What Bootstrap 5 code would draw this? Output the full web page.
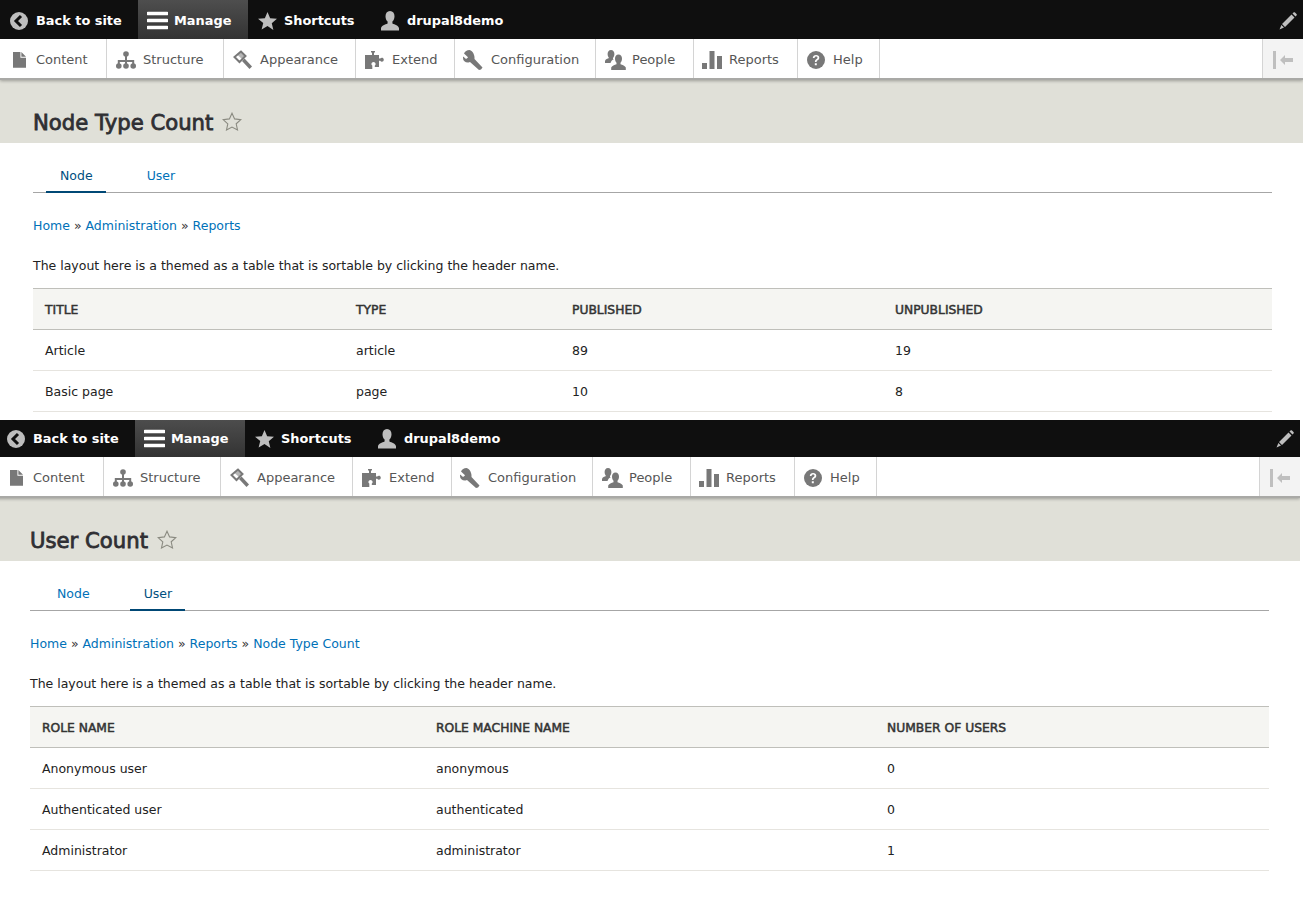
<!DOCTYPE html>
<html lang="en"><head><meta charset="utf-8"><title>Node Type Count</title>
<link rel="stylesheet" href="https://cdn.jsdelivr.net/npm/bootstrap@5.3.0/dist/css/bootstrap.min.css">
<style>
body{font-family:"DejaVu Sans",Verdana,sans-serif;font-size:12.5px;color:#222330;background:#fff;overflow-x:hidden}
.shot{width:1303px;height:420px;overflow:hidden}
.shot-b{margin-left:-3px;height:484px}
.shot-b .barblack{margin-top:-2px}
.barblack{height:39px;background:#0f0f0f;color:#fff;font-weight:700;font-size:12.9px}
.barblack a{color:#fff;text-decoration:none;height:39px;padding-top:2px;display:flex;align-items:center;white-space:nowrap}
.tab-back{padding-left:10px;width:138px}
.tab-back svg{margin-right:8px}
.tab-man{width:110px;background:linear-gradient(#4e4e4e,#333);padding-left:9px}
.tab-man svg{margin-right:6px}
.tab-sho{width:125px;padding-left:10px}
.tab-sho svg{margin-right:7px}
.tab-usr{padding-left:8px}
.tab-usr svg{margin-right:8px}
.pencil{margin-left:auto;margin-right:6px}
.bartray{height:39px;background:#fff;box-shadow:0 2px 0 #a9a9a6,0 3px 3px rgba(0,0,0,.3);position:relative;font-size:13px}
.bartray a{color:#565656;text-decoration:none;height:39px;padding-top:2px;display:flex;align-items:center;border-right:1px solid #d4d4d4;white-space:nowrap}
.bartray svg{margin-right:7px;flex:none}
.tog{margin-left:auto;width:41px;background:#f3f3f3;border-left:1px solid #d4d4d4;height:39px;padding-top:2px;display:flex;align-items:center;justify-content:center}
.bartray .tog svg{margin:0}
.headband{height:65px;background:#e0e0d8;padding:31px 33px 0;display:flex;align-items:flex-start}
.headband h1{font-family:"DejaVu Sans",Verdana,sans-serif;font-size:21.2px;font-weight:400;-webkit-text-stroke:.8px #2f2f33;margin:0;line-height:28px;color:#2f2f33}
.headband svg{margin:3px 0 0 9px}
.bodywrap{padding:0 31px 0 33px}
.tabrow{height:50px;border-bottom:1px solid #a6a6a6;display:flex;padding-left:13px}
.tabrow a{text-decoration:none;color:#0071b8;height:50px;padding:16px 13px 0 14px;display:flex;align-items:center;margin-right:27px}
.tabrow a.on{color:#004f80;border-bottom:2px solid #004875;padding-top:18px}
.crumbs{margin-top:24px;line-height:18px;color:#333}
.crumbs a{color:#0071b8;text-decoration:none}
.intro{margin:22px 0 13px;line-height:18px;color:#222}
.dtab{width:100%;table-layout:fixed;border-collapse:collapse;color:#222}
.dtab th{background:#f5f5f2;border-top:1px solid #bfbfba;border-bottom:1px solid #bfbfba;height:41px;padding:3px 12px 0;font-weight:400;text-transform:uppercase;color:#333;font-size:12.3px;-webkit-text-stroke:.5px #333}
.dtab td{height:41px;padding:3px 12px 0;border-bottom:1px solid #e6e4df}
</style></head><body>
<svg width="0" height="0" class="d-block">
<defs>
<symbol id="i-back" viewBox="0 0 18 18"><circle cx="9" cy="9" r="9" fill="#bebebe"/><path d="M11 4 6 9l5 5" fill="none" stroke="#0f0f0f" stroke-width="3"/></symbol>
<symbol id="i-menu" viewBox="0 0 21 19"><path d="M1 2.500h19M1 9.500h19M1 16.500h19" stroke="#fff" stroke-width="3.400" stroke-linecap="round"/></symbol>
<symbol id="i-star" viewBox="0 0 20 19"><path d="M10 0l2.800 6.600 7.200.6-5.500 4.700 1.700 7.100L10 14.900 3.800 18.600l1.700-7.100L0 7.200l7.200-.6z" fill="#bebebe"/></symbol>
<symbol id="i-user" viewBox="1 0 18 20"><path d="M10 0c3 0 4.500 2.200 4.500 5.300 0 2.400-1 4.300-2.100 5.300v1.900c2.500 1 6.100 2.100 6.600 4.700v2.300H1v-2.300c.5-2.600 4.100-3.700 6.600-4.700v-1.900C6.500 9.600 5.500 7.700 5.500 5.300 5.500 2.200 7 0 10 0z" fill="#bebebe"/></symbol>
<symbol id="i-pen" viewBox="0 0 18 18"><path d="M12.500 2.500l3 3L6 15l-3-3zM13.500 1.500l1-1c.5-.5 1-.5 1.500 0l1.500 1.500c.5.500.500 1 0 1.500l-1 1zM2.400 13l2.600 2.600L.5 17.500z" fill="#bebebe"/></symbol>
<symbol id="i-content" viewBox="0 0 14 18"><path d="M0 1h8v6h6v11H0zM9 1l5 5H9z" fill="#787878"/></symbol>
<symbol id="i-struct" viewBox="0 0 20 18"><circle cx="10" cy="3" r="2.800" fill="#787878"/><circle cx="2.800" cy="15" r="2.800" fill="#787878"/><circle cx="10" cy="15" r="2.800" fill="#787878"/><circle cx="17.200" cy="15" r="2.800" fill="#787878"/><path d="M10 3v12M2.800 15v-5h14.400v5" fill="none" stroke="#787878" stroke-width="2"/></symbol>
<symbol id="i-appear" viewBox="0 0 20 20"><path d="M8 1.500 1.500 7 6.500 12l6-6z" fill="none" stroke="#787878" stroke-width="2"/><path d="M7.500 1 13 6 9.500 9.500 4 4.500z" fill="#787878" opacity=".55"/><path d="M9 11l2.500-2.500 7.500 8L16.500 19z" fill="#787878"/></symbol>
<symbol id="i-ext" viewBox="0 0 20 18"><path d="M6 0h4v1.500H9v2.500h5v3.600h1.200c.8-1 2.100-1.200 3-.4.800.7.800 2.300 0 3-.9.800-2.200.6-3-.4H14v6.200H9.800v-1.500c1-.8 1.100-2 .3-2.800-.8-.8-2.400-.8-3.200 0-.8.800-.6 2 .4 2.800V18H0V4h7V1.500H6z" fill="#787878"/></symbol>
<symbol id="i-conf" viewBox="0 0 20 20"><path d="M6.500 0C3.800 0 2 1.500 1 3.500L5 7.200c-.4.900-1.200 1.500-2.300 1.500L.2 6.500C0 7 0 7.500 0 8c0 3 2.500 4.800 5.500 4.500l1.500-.5 9 8 2-.5 1.500-2-8-8.500c.5-3.500-1.500-8-5-9z" fill="#787878"/></symbol>
<symbol id="i-people" viewBox="0 0 21 20"><path d="M6 0c2.200 0 3.400 1.700 3.400 4 0 1.800-.7 3.100-1.400 3.900v1l.8.400c-1.300.6-2.800 1.800-3.300 3.700H0v-2c.4-1.600 2.700-2.200 4-2.900V7.900C3.300 7.100 2.600 5.800 2.600 4 2.600 1.700 3.800 0 6 0z" fill="#787878"/><path d="M13.500 4.500c2.300 0 3.500 1.700 3.500 4.200 0 1.800-.8 3.300-1.500 4v1.500c1.800.8 4.800 1.500 5.300 3.400V20H6.200v-2.400c.5-1.900 3.500-2.600 5.300-3.400v-1.500c-.7-.7-1.500-2.200-1.500-4 0-2.500 1.200-4.200 3.500-4.200z" fill="#787878"/></symbol>
<symbol id="i-rep" viewBox="0 0 20 18"><path d="M0 12h5v6H0zM7.500 0h5v18h-5zM15 5h5v13h-5z" fill="#787878"/></symbol>
<symbol id="i-help" viewBox="0 0 18 18"><circle cx="9" cy="9" r="9" fill="#787878"/><path d="M5.800 7c0-2 1.500-3 3.300-3s3.200 1 3.200 2.800c0 2.400-2.700 2.300-2.700 4.200H7.900c0-3 2.600-2.800 2.600-4.200 0-.8-.6-1.200-1.400-1.200-.9 0-1.500.6-1.500 1.400zM7.800 12.200h2v2h-2z" fill="#fff"/></symbol>
<symbol id="i-tog" viewBox="0 0 20 18"><path d="M0 0h3v18H0zM7 9l5-5v3h8v4h-8v3z" fill="#bfbfbf"/></symbol>
<symbol id="i-fav" viewBox="0 0 20 19"><path d="M10 1.200l2.600 5.700 6.200.7-4.600 4.200 1.300 6.100L10 15l-5.500 3 1.300-6.100L1.200 7.600l6.200-.7z" fill="none" stroke="#8a8a80" stroke-width="1.100"/></symbol>
</defs></svg>

<section class="shot">
 <div class="barblack d-flex">
  <a class="tab-back" href="#"><svg width="18" height="18"><use href="#i-back"/></svg>Back to site</a>
  <a class="tab-man" href="#"><svg width="21" height="19"><use href="#i-menu"/></svg>Manage</a>
  <a class="tab-sho" href="#"><svg width="19" height="18"><use href="#i-star"/></svg>Shortcuts</a>
  <a class="tab-usr" href="#"><svg width="18" height="20"><use href="#i-user"/></svg>drupal8demo</a>
  <a class="pencil" href="#"><svg width="18" height="18"><use href="#i-pen"/></svg></a>
 </div>
 <div class="bartray d-flex">
  <a style="width:107px;padding-left:13px" href="#"><svg width="13" height="17" style="margin-right:10px"><use href="#i-content"/></svg>Content</a>
  <a style="width:117px;padding-left:9px" href="#"><svg width="20" height="18"><use href="#i-struct"/></svg>Structure</a>
  <a style="width:132px;padding-left:9px" href="#"><svg width="20" height="20"><use href="#i-appear"/></svg>Appearance</a>
  <a style="width:99px;padding-left:9px" href="#"><svg width="20" height="18"><use href="#i-ext"/></svg>Extend</a>
  <a style="width:141px;padding-left:8px" href="#"><svg width="20" height="20" style="margin-right:8px"><use href="#i-conf"/></svg>Configuration</a>
  <a style="width:98px;padding-left:9px" href="#"><svg width="21" height="20" style="margin-right:6px"><use href="#i-people"/></svg>People</a>
  <a style="width:104px;padding-left:8px" href="#"><svg width="20" height="18"><use href="#i-rep"/></svg>Reports</a>
  <a style="width:82px;padding-left:9px" href="#"><svg width="18" height="18" style="margin-right:8px"><use href="#i-help"/></svg>Help</a>
  <div class="tog"><svg width="20" height="18"><use href="#i-tog"/></svg></div>
 </div>
 <div class="headband"><h1>Node Type Count</h1><svg width="20" height="19"><use href="#i-fav"/></svg></div>
 <div class="bodywrap">
  <nav class="tabrow"><a class="on" href="#">Node</a><a href="#">User</a></nav>
  <div class="crumbs"><a href="#">Home</a> » <a href="#">Administration</a> » <a href="#">Reports</a></div>
  <p class="intro">The layout here is a themed as a table that is sortable by clicking the header name.</p>
  <table class="dtab">
   <colgroup><col style="width:311px"><col style="width:216px"><col style="width:323px"><col></colgroup>
   <thead><tr><th>Title</th><th>Type</th><th>Published</th><th>Unpublished</th></tr></thead>
   <tbody><tr><td>Article</td><td>article</td><td>89</td><td>19</td></tr>
   <tr><td>Basic page</td><td>page</td><td>10</td><td>8</td></tr></tbody>
  </table>
 </div>
</section>

<section class="shot shot-b">
 <div class="barblack d-flex">
  <a class="tab-back" href="#"><svg width="18" height="18"><use href="#i-back"/></svg>Back to site</a>
  <a class="tab-man" href="#"><svg width="21" height="19"><use href="#i-menu"/></svg>Manage</a>
  <a class="tab-sho" href="#"><svg width="19" height="18"><use href="#i-star"/></svg>Shortcuts</a>
  <a class="tab-usr" href="#"><svg width="18" height="20"><use href="#i-user"/></svg>drupal8demo</a>
  <a class="pencil" href="#"><svg width="18" height="18"><use href="#i-pen"/></svg></a>
 </div>
 <div class="bartray d-flex">
  <a style="width:107px;padding-left:13px" href="#"><svg width="13" height="17" style="margin-right:10px"><use href="#i-content"/></svg>Content</a>
  <a style="width:117px;padding-left:9px" href="#"><svg width="20" height="18"><use href="#i-struct"/></svg>Structure</a>
  <a style="width:132px;padding-left:9px" href="#"><svg width="20" height="20"><use href="#i-appear"/></svg>Appearance</a>
  <a style="width:99px;padding-left:9px" href="#"><svg width="20" height="18"><use href="#i-ext"/></svg>Extend</a>
  <a style="width:141px;padding-left:8px" href="#"><svg width="20" height="20" style="margin-right:8px"><use href="#i-conf"/></svg>Configuration</a>
  <a style="width:98px;padding-left:9px" href="#"><svg width="21" height="20" style="margin-right:6px"><use href="#i-people"/></svg>People</a>
  <a style="width:104px;padding-left:8px" href="#"><svg width="20" height="18"><use href="#i-rep"/></svg>Reports</a>
  <a style="width:82px;padding-left:9px" href="#"><svg width="18" height="18" style="margin-right:8px"><use href="#i-help"/></svg>Help</a>
  <div class="tog"><svg width="20" height="18"><use href="#i-tog"/></svg></div>
 </div>
 <div class="headband"><h1>User Count</h1><svg width="20" height="19"><use href="#i-fav"/></svg></div>
 <div class="bodywrap">
  <nav class="tabrow"><a href="#">Node</a><a class="on" href="#">User</a></nav>
  <div class="crumbs"><a href="#">Home</a> » <a href="#">Administration</a> » <a href="#">Reports</a> » <a href="#">Node Type Count</a></div>
  <p class="intro">The layout here is a themed as a table that is sortable by clicking the header name.</p>
  <table class="dtab">
   <colgroup><col style="width:394px"><col style="width:451px"><col></colgroup>
   <thead><tr><th>Role Name</th><th>Role Machine Name</th><th>Number Of Users</th></tr></thead>
   <tbody><tr><td>Anonymous user</td><td>anonymous</td><td>0</td></tr>
   <tr><td>Authenticated user</td><td>authenticated</td><td>0</td></tr>
   <tr><td>Administrator</td><td>administrator</td><td>1</td></tr></tbody>
  </table>
 </div>
</section>
<script src="https://cdn.jsdelivr.net/npm/bootstrap@5.3.0/dist/js/bootstrap.bundle.min.js"></script>
</body></html>
